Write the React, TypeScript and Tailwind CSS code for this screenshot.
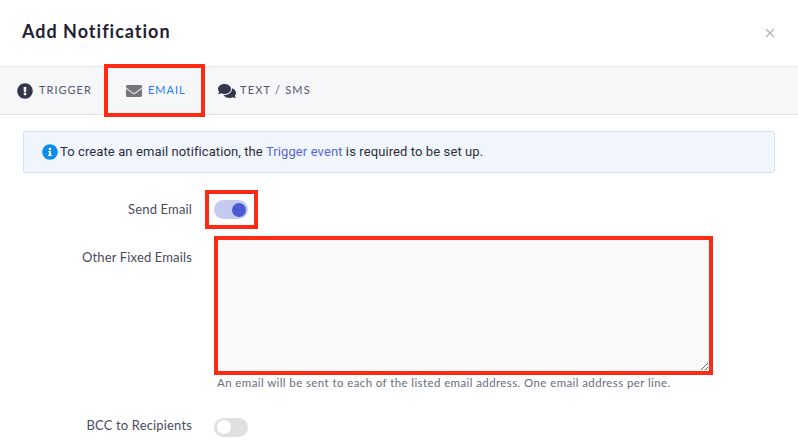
import { FaComments, FaEnvelope, FaExclamationCircle, FaInfoCircle } from "react-icons/fa"

function Toggle({ on }: { on?: boolean }) {
	return (
		<div
			className={`flex h-[19px] w-[34px] items-center rounded-full px-[2.5px] ${
				on ? "justify-end bg-[#c5caf0]" : "justify-start bg-[#e0e0e0]"
			}`}
		>
			<div className={`size-[14px] rounded-full ${on ? "bg-[#4a5bd4]" : "bg-white"}`} />
		</div>
	)
}

function Label({ children }: { children: string }) {
	return <div className="w-[192px] text-right text-[13px] leading-[18px] tracking-[0.15px] text-[#4a4b60]">{children}</div>
}

export default function App() {
	return (
		<div className="h-[446px] w-[798px] overflow-hidden bg-white font-['Lato','Open_Sans',sans-serif]">
			<div className="flex h-[66px] items-center justify-between pb-[4px] pl-[22px] pr-[23px]">
				<h1 className="text-[18px] font-bold tracking-[1px] text-[#1f2235]">Add Notification</h1>
				<svg width="10" height="10" viewBox="0 0 10 10" className="mt-[4px] text-[#b4b4b8]" fill="none" stroke="currentColor" strokeWidth="1.3">
					<path d="M1 1l8 8M9 1l-8 8" />
				</svg>
			</div>

			<div className="flex h-[49px] items-center border-y border-t-[#e6e8f0] border-b-[#e5e1e4] bg-[#f6f7f9] pl-[17px]">
				<div className="flex w-[87px] items-center gap-[6px] text-[11px] tracking-[1px] text-[#55566a]">
					<FaExclamationCircle className="text-[16px] text-[#33364d]" />
					TRIGGER
				</div>
				<div className="-my-[3px] flex h-[53px] w-[101px] items-center gap-[6px] border-4 border-[#ff2a12] pl-[18px] text-[11px] tracking-[1px] text-[#2f7bf5]">
					<FaEnvelope className="text-[16px] text-[#75757a]" />
					EMAIL
				</div>
				<div className="flex items-center gap-[4px] pl-[13px] text-[11px] tracking-[1.2px] text-[#55566a]">
					<FaComments className="text-[18px] text-[#33364d]" />
					TEXT / SMS
				</div>
			</div>

			<div className="px-[23px] pt-[16px]">
				<div className="flex h-[42px] w-[752px] items-center gap-[2px] rounded-[3px] border border-[#cfe0fa] bg-[#f1f6fe] pl-[18px] font-['Roboto',sans-serif] text-[13px] tracking-[0.1px] text-[#2c2e3a]">
					<FaInfoCircle className="text-[16px] text-[#0d8cf0]" />
					<span>
						To create an email notification, the <span className="text-[#5a67d8]">Trigger event</span> is required to be set up.
					</span>
				</div>
			</div>

			<div className="mt-[17px] flex flex-col">
				<div className="flex h-[39px] items-center">
					<div className="pb-[2px]">
						<Label>Send Email</Label>
					</div>
					<div className="ml-[13px] flex h-[39px] w-[53px] items-center border-4 border-[#ff2a12] pl-[5px]">
						<Toggle on />
					</div>
				</div>

				<div className="mt-[7px] flex items-start">
					<div className="pt-[12px]">
						<Label>Other Fixed Emails</Label>
					</div>
					<div className="ml-[22px]">
						<textarea className="block h-[139px] w-[499px] border-4 border-[#ff2a12] bg-[#f9f9f9] outline-none" />
						<p className="ml-[3px] text-[11.5px] leading-[16px] tracking-[0.4px] text-[#6a6c80]">
							An email will be sent to each of the listed email address. One email address per line.
						</p>
					</div>
				</div>

				<div className="mt-[25px] flex items-center">
					<div className="pb-[4px]">
						<Label>BCC to Recipients</Label>
					</div>
					<div className="ml-[22px]">
						<Toggle />
					</div>
				</div>
			</div>
		</div>
	)
}
